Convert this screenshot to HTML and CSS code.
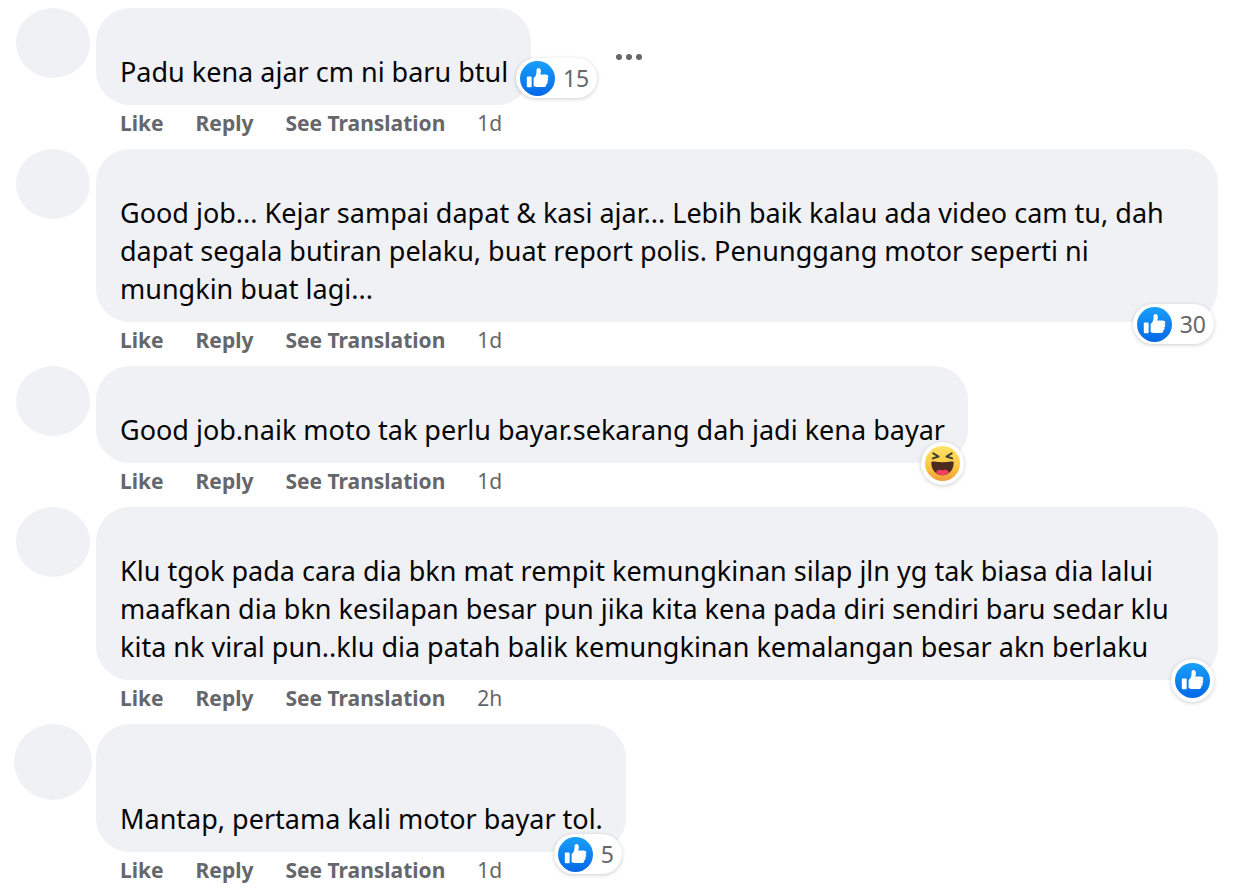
FILE: index.html
```html
<!DOCTYPE html>
<html lang="ms">
<head>
    <meta charset="UTF-8">
    <meta name="viewport" content="width=device-width, initial-scale=1.0">
    <title>Comments</title>
    <link rel="stylesheet" href="styles.css">
</head>
<body>
    <!-- shared reaction icons -->
    <svg class="sprite" aria-hidden="true">
        <defs>
            <linearGradient id="blue" x1="0" y1="0" x2="0" y2="1">
                <stop offset="0" stop-color="#18a0fb"/>
                <stop offset="1" stop-color="#0567e6"/>
            </linearGradient>
            <linearGradient id="yellow" x1="0" y1="0" x2="0" y2="1">
                <stop offset="0" stop-color="#ffe36a"/>
                <stop offset="0.6" stop-color="#fcc63f"/>
                <stop offset="1" stop-color="#f19a3c"/>
            </linearGradient>
        </defs>
        <symbol id="icon-like" viewBox="0 0 36 36">
            <circle cx="18" cy="18" r="18" fill="url(#blue)"/>
            <rect x="7" y="16" width="5" height="11" rx="1" fill="#fff"/>
            <path fill="#fff" d="M14 17.500 C16.200 15.800 17 13.500 17 11 V9.500 C17 6.500 21.500 6.300 21.500 10.500 C21.500 12.200 21 13 20.600 14 H26.500 C29.500 14 29.800 17 28.300 17.800 C29.600 18.700 29.200 20.500 28 20.900 C28.900 22 28.300 23.500 27 23.900 C27.400 25.700 26 26.800 24.500 26.800 H18.500 C16.500 26.800 15.500 26.200 14 25.600 Z"/>
        </symbol>
        <symbol id="icon-haha" viewBox="0 0 36 36">
            <circle cx="18" cy="18" r="18" fill="url(#yellow)"/>
            <path d="M8.500 7.500 L14 10.800 L8 12.800 M27.500 7.500 L22 10.800 L28 12.800" fill="none" stroke="#3d3c35" stroke-width="2" stroke-linecap="round" stroke-linejoin="round"/>
            <path d="M6.500 17 C6.500 15.800 7.500 15.800 9 16 C15 16.800 21 16.800 27 16 C28.500 15.800 29.500 15.800 29.500 17 C29.500 24.500 25 30 18 30 C11 30 6.500 24.500 6.500 17 Z" fill="#4b2a20"/>
            <path d="M11.300 27 C13 24 16 24 18 25 C20 24 23 24 24.700 27 C23 29 20.800 30 18 30 C15.200 30 13 29 11.300 27 Z" fill="#f4405f"/>
        </symbol>
    </svg>

    <main class="comments">
        <article class="comment">
            <div class="avatar-col"><div class="avatar"></div></div>
            <div class="content">
                <div class="row">
                    <div class="bubble">
                        <p>Padu kena ajar cm ni baru btul</p>
                        <button class="reactions reactions-side" aria-label="15 likes"><svg><use href="#icon-like"/></svg><span>15</span></button>
                    </div>
                    <button class="more" aria-label="More options">
                        <svg viewBox="0 0 28 8"><circle cx="4" cy="4" r="3"/><circle cx="14" cy="4" r="3"/><circle cx="24" cy="4" r="3"/></svg>
                    </button>
                </div>
                <div class="actions"><button>Like</button><button>Reply</button><button>See Translation</button><a href="#">1d</a></div>
            </div>
        </article>

        <article class="comment">
            <div class="avatar-col"><div class="avatar"></div></div>
            <div class="content">
                <div class="bubble bubble-full">
                    <p>Good job... Kejar sampai dapat &amp; kasi ajar... Lebih baik kalau ada video cam tu, dah<br>dapat segala butiran pelaku, buat report polis. Penunggang motor seperti ni<br>mungkin buat lagi...</p>
                    <button class="reactions" aria-label="30 likes"><svg><use href="#icon-like"/></svg><span>30</span></button>
                </div>
                <div class="actions"><button>Like</button><button>Reply</button><button>See Translation</button><a href="#">1d</a></div>
            </div>
        </article>

        <article class="comment">
            <div class="avatar-col"><div class="avatar"></div></div>
            <div class="content">
                <div class="bubble">
                    <p>Good job.naik moto tak perlu bayar.sekarang dah jadi kena bayar</p>
                    <button class="reactions reactions-single" aria-label="Haha"><svg><use href="#icon-haha"/></svg></button>
                </div>
                <div class="actions"><button>Like</button><button>Reply</button><button>See Translation</button><a href="#">1d</a></div>
            </div>
        </article>

        <article class="comment">
            <div class="avatar-col"><div class="avatar"></div></div>
            <div class="content">
                <div class="bubble bubble-full">
                    <p>Klu tgok pada cara dia bkn mat rempit kemungkinan silap jln yg tak biasa dia lalui<br>maafkan dia bkn kesilapan besar pun jika kita kena pada diri sendiri baru sedar klu<br>kita nk viral pun..klu dia patah balik kemungkinan kemalangan besar akn berlaku</p>
                    <button class="reactions reactions-single" aria-label="Like"><svg><use href="#icon-like"/></svg></button>
                </div>
                <div class="actions"><button>Like</button><button>Reply</button><button>See Translation</button><a href="#">2h</a></div>
            </div>
        </article>

        <article class="comment">
            <div class="avatar-col"><div class="avatar avatar-large"></div></div>
            <div class="content">
                <div class="bubble bubble-tall">
                    <p>Mantap, pertama kali motor bayar tol.</p>
                    <button class="reactions" aria-label="5 likes"><svg><use href="#icon-like"/></svg><span>5</span></button>
                </div>
                <div class="actions"><button>Like</button><button>Reply</button><button>See Translation</button><a href="#">1d</a></div>
            </div>
        </article>
    </main>
</body>
</html>
```
FILE: styles.css
```css
* {
    margin: 0;
    padding: 0;
    box-sizing: border-box;
}

body {
    font-family: 'Noto Sans', 'Open Sans', sans-serif;
    background: #fff;
    color: #050505;
}

button {
    font: inherit;
    color: inherit;
    background: none;
    border: none;
    cursor: pointer;
}

.sprite {
    position: absolute;
    width: 0;
    height: 0;
}

.comments {
    padding: 8px 37px 0 0;
}

.comment {
    display: flex;
}

.avatar-col {
    flex: none;
    display: flex;
    justify-content: center;
    align-items: flex-start;
    width: 96px;
    padding-left: 10px;
}

.avatar {
    width: 74px;
    height: 70px;
    border-radius: 50%;
    background: #f0f1f5;
}

.avatar-large {
    width: 78px;
    height: 76px;
}

.content {
    flex: 1;
    min-width: 0;
}

.row {
    display: flex;
    align-items: center;
    gap: 84px;
}

.bubble {
    position: relative;
    width: fit-content;
    padding: 45px 23px 14px 24px;
    border-radius: 34px;
    background: #f0f1f5;
    font-size: 27px;
    line-height: 38px;
}

.bubble-full {
    width: auto;
}

.bubble-tall {
    padding-top: 76px;
}

.reactions {
    position: absolute;
    right: 4px;
    bottom: -22px;
    display: flex;
    align-items: center;
    gap: 8px;
    height: 40px;
    padding: 0 8px 0 4px;
    border-radius: 20px;
    background: #fff;
    box-shadow: 0 1px 4px rgba(0, 0, 0, 0.2);
    color: #65676b;
    font-size: 23px;
    line-height: 36px;
}

.reactions svg {
    width: 35px;
    height: 35px;
}

.reactions-side {
    right: -66px;
    bottom: 7px;
}

.reactions-single {
    height: 43px;
    padding: 0 4px;
    border-radius: 50%;
}

.more {
    display: flex;
}

.more svg {
    width: 28px;
    height: 8px;
    fill: #65676b;
}

.actions {
    display: flex;
    align-items: center;
    gap: 32px;
    height: 44px;
    padding: 0 0 8px 24px;
    color: #65676b;
    font-size: 21px;
    line-height: 30px;
}

.actions button {
    font-weight: 700;
}

.actions a {
    color: inherit;
    text-decoration: none;
}
```
